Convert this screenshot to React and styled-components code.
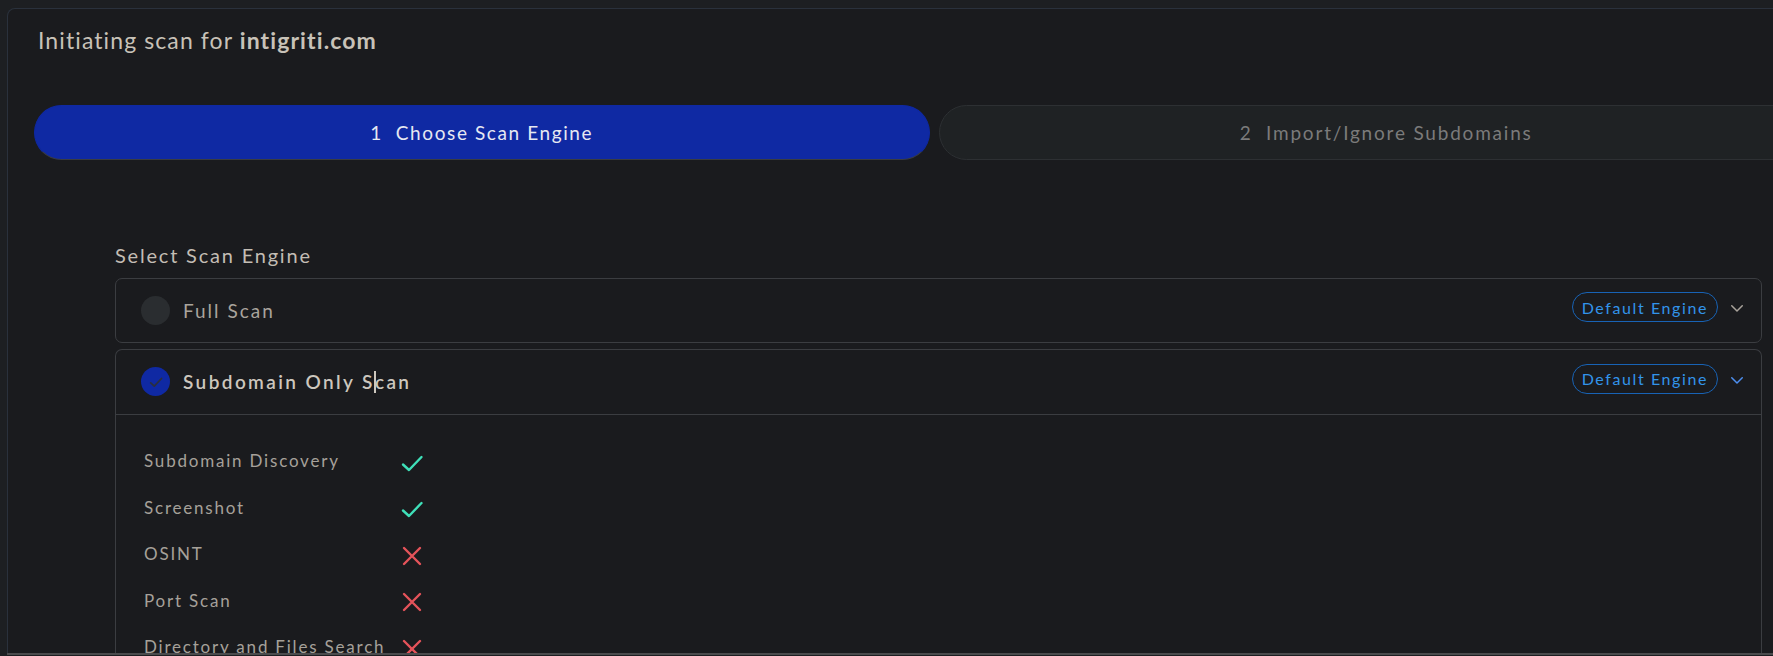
import styled, { createGlobalStyle } from 'styled-components';

const GlobalStyle = createGlobalStyle`
  html, body {
    margin: 0;
    padding: 0;
    background: #1d1f22;
    overflow: hidden;
  }
  * {
    box-sizing: border-box;
  }
`;

const FEATURES = [
  { name: 'Subdomain Discovery', enabled: true },
  { name: 'Screenshot', enabled: true },
  { name: 'OSINT', enabled: false },
  { name: 'Port Scan', enabled: false },
  { name: 'Directory and Files Search', enabled: false },
];

function CheckMark({ color = '#3fe0b9', size = 24, width = 2.4 }) {
  return (
    <svg width={size} height={size} viewBox="0 0 24 24" fill="none">
      <path
        d="M3 13.5 L9 19 L21.5 6"
        stroke={color}
        strokeWidth={width}
        strokeLinecap="round"
        strokeLinejoin="round"
      />
    </svg>
  );
}

function CrossMark() {
  return (
    <svg width="22" height="22" viewBox="0 0 22 22" fill="none">
      <path
        d="M3 3 L19 19 M19 3 L3 19"
        stroke="#e5535a"
        strokeWidth="2.4"
        strokeLinecap="round"
      />
    </svg>
  );
}

function Chevron({ color }) {
  return (
    <svg width="18" height="18" viewBox="0 0 24 24" fill="none">
      <path
        d="M5 9 L12 16 L19 9"
        stroke={color}
        strokeWidth="2"
        strokeLinecap="round"
        strokeLinejoin="round"
      />
    </svg>
  );
}

function EngineHeader({ name, checked, open }) {
  return (
    <HeaderRow $open={open}>
      <Radio $checked={checked}>
        {checked && <CheckMark color="#2b2f3d" size={14} width={3} />}
      </Radio>
      <EngineName $checked={checked}>
        {checked ? (
          <>
            Subdomain Only S<Caret />can
          </>
        ) : (
          name
        )}
      </EngineName>
      <Badge>Default Engine</Badge>
      <ChevronWrap>
        <Chevron color={open ? '#4d8ff0' : '#a9a39b'} />
      </ChevronWrap>
    </HeaderRow>
  );
}

export default function App() {
  return (
    <>
      <GlobalStyle />
      <Page>
        <Card>
          <Title>
            Initiating scan for <strong>intigriti.com</strong>
          </Title>
          <Steps>
            <Step $active>1&nbsp;&nbsp;Choose Scan Engine</Step>
            <Step>2&nbsp;&nbsp;Import/Ignore Subdomains</Step>
          </Steps>
          <EngineSection>
            <SectionLabel>Select Scan Engine</SectionLabel>
            <EngineItem>
              <EngineHeader name="Full Scan" />
            </EngineItem>
            <EngineItem $grow>
              <EngineHeader name="Subdomain Only Scan" checked open />
              <EngineBody>
                <FeatureGrid>
                  {FEATURES.map((f) => (
                    <FeatureRow key={f.name}>
                      <FeatureName>{f.name}</FeatureName>
                      <FeatureIcon>
                        {f.enabled ? <CheckMark /> : <CrossMark />}
                      </FeatureIcon>
                    </FeatureRow>
                  ))}
                </FeatureGrid>
              </EngineBody>
            </EngineItem>
          </EngineSection>
        </Card>
        <Footer />
      </Page>
    </>
  );
}

// styled-components

const Page = styled.div`
  height: 100vh;
  display: flex;
  flex-direction: column;
  padding: 8px 0 0 7px;
  font-family: 'Lato', 'Noto Sans', sans-serif;
`;

const Card = styled.div`
  flex: 1;
  min-height: 0;
  width: 1854px;
  display: flex;
  flex-direction: column;
  background: #1a1b1e;
  border: 1px solid #2a313c;
  border-bottom: none;
  border-radius: 8px 8px 0 0;
  padding: 18px 26px 0 26px;
  overflow: hidden;
`;

const Title = styled.h1`
  margin: 0 0 0 4px;
  font-size: 23px;
  line-height: 1.2;
  font-weight: 400;
  letter-spacing: 1.1px;
  color: #c8c2b8;

  strong {
    font-weight: 700;
  }
`;

const Steps = styled.div`
  display: grid;
  grid-template-columns: 1fr 1fr;
  gap: 9px;
  margin-top: 50px;
`;

const Step = styled.div`
  height: 55px;
  display: flex;
  align-items: center;
  justify-content: center;
  border-radius: 28px;
  font-size: 19px;
  letter-spacing: ${({ $active }) => ($active ? '1.6px' : '1.8px')};
  background: ${({ $active }) => ($active ? '#0f29a3' : '#1f2224')};
  color: ${({ $active }) => ($active ? '#e6e8f2' : '#7b7b7b')};
  border: 1px solid ${({ $active }) => ($active ? '#0f29a3' : '#2d3033')};
  border-bottom-color: ${({ $active }) => ($active ? '#3a3c40' : '#2d3033')};
`;

const EngineSection = styled.div`
  flex: 1;
  min-height: 0;
  display: flex;
  flex-direction: column;
  margin: 83px 72px 0 81px;
`;

const SectionLabel = styled.div`
  font-size: 20px;
  line-height: 1.2;
  letter-spacing: 1.8px;
  color: #c3bdb4;
  margin-bottom: 11px;
`;

const EngineItem = styled.div`
  border: 1px solid #3b3d41;
  border-radius: 7px;
  margin-bottom: 6px;
  ${({ $grow }) =>
    $grow &&
    `
    flex: 1;
    margin-bottom: 0;
    border-bottom: none;
    border-radius: 7px 7px 0 0;
  `}
`;

const HeaderRow = styled.div`
  height: ${({ $open }) => ($open ? '65px' : '63px')};
  display: flex;
  align-items: center;
  padding: 0 15px 0 25px;
  border-bottom: ${({ $open }) => ($open ? '1px solid #3b3d41' : 'none')};
`;

const Radio = styled.span`
  width: 29px;
  height: 29px;
  border-radius: 50%;
  flex: none;
  display: flex;
  align-items: center;
  justify-content: center;
  background: ${({ $checked }) => ($checked ? '#0f29a3' : '#2a2d30')};
`;

const EngineName = styled.span`
  flex: 1;
  margin-left: 13px;
  font-size: 19px;
  letter-spacing: ${({ $checked }) => ($checked ? '2.4px' : '2px')};
  font-weight: ${({ $checked }) => ($checked ? 600 : 400)};
  color: ${({ $checked }) => ($checked ? '#cdc7be' : '#a9a49d')};
`;

const Caret = styled.span`
  display: inline-block;
  width: 1.5px;
  height: 22px;
  margin: 0 -0.75px;
  background: #cdc7be;
  vertical-align: -4px;
`;

const Badge = styled.span`
  height: 30px;
  display: flex;
  align-items: center;
  padding: 0 9px;
  border: 1px solid #1863b5;
  border-radius: 15px;
  font-size: 16px;
  letter-spacing: 1.6px;
  color: #3294ea;
  margin-top: -6px;
`;

const ChevronWrap = styled.span`
  display: flex;
  margin-left: 10px;
  margin-top: -4px;
`;

const EngineBody = styled.div`
  padding: 23px 0 0 28px;
`;

const FeatureGrid = styled.div`
  display: flex;
  flex-direction: column;
`;

const FeatureRow = styled.div`
  height: 46.5px;
  display: grid;
  grid-template-columns: 256px 24px;
  align-items: center;
`;

const FeatureName = styled.span`
  font-size: 17px;
  letter-spacing: 1.8px;
  color: #a6a19a;
`;

const FeatureIcon = styled.span`
  display: flex;
  align-items: center;
  justify-content: center;
  margin-top: 4px;
`;

const Footer = styled.div`
  flex: none;
  height: 3px;
  background: #1d1f22;
  border-top: 2px solid #4a4b4d;
`;
